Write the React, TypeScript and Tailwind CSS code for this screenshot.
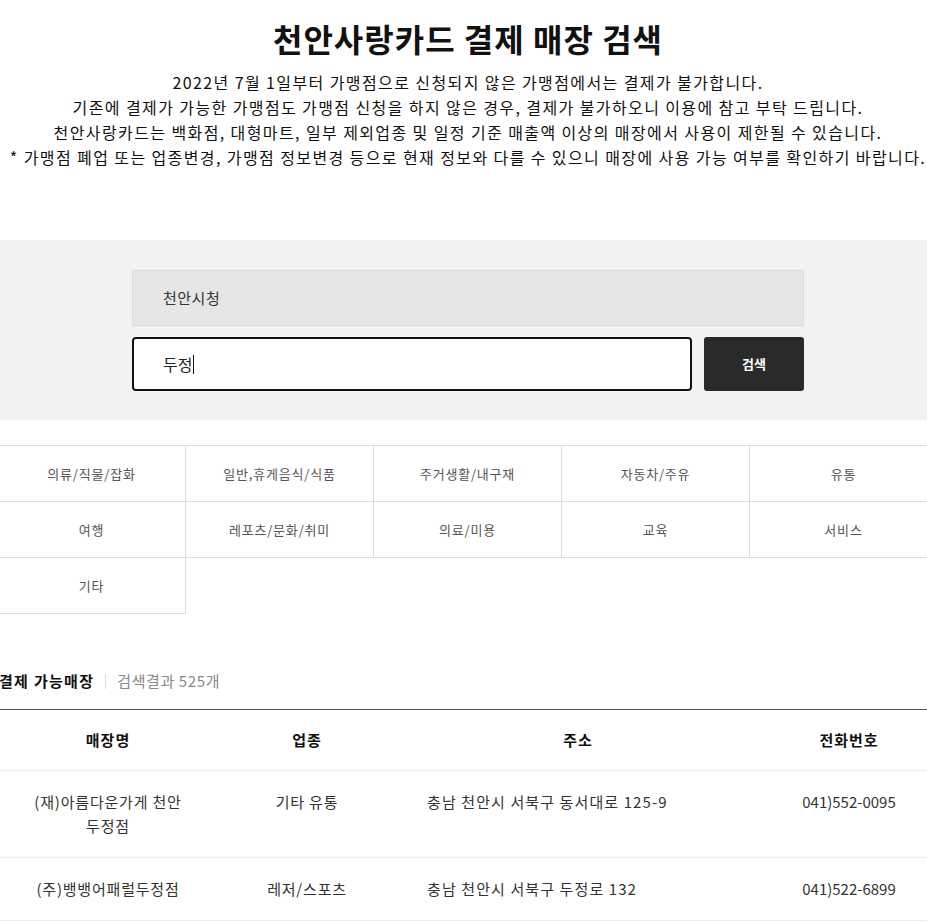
import React from 'react'

const categories = [
  '의류/직물/잡화',
  '일반,휴게음식/식품',
  '주거생활/내구재',
  '자동차/주유',
  '유통',
  '여행',
  '레포츠/문화/취미',
  '의료/미용',
  '교육',
  '서비스',
  '기타',
]

const stores = [
  { name: '(재)아름다운가게 천안\n두정점', type: '기타 유통', addr: '충남 천안시 서북구 동서대로 125-9', tel: '041)552-0095' },
  { name: '(주)뱅뱅어패럴두정점', type: '레저/스포츠', addr: '충남 천안시 서북구 두정로 132', tel: '041)522-6899' },
]

export default function App() {
  return (
    <div className="w-full overflow-hidden bg-white text-[#111] font-['Noto_Sans_CJK_KR','Noto_Sans',sans-serif]">
      {/* intro */}
      <div className="w-[940px] ml-[-2px] pt-[18px] text-center">
        <h1 className="text-[32px] leading-[40px] font-bold tracking-[1px]">천안사랑카드 결제 매장 검색</h1>
        <div className="mt-[12px] text-[16px] leading-[25px] text-[#111] tracking-[1.4px]">
          <p>2022년 7월 1일부터 가맹점으로 신청되지 않은 가맹점에서는 결제가 불가합니다.</p>
          <p>기존에 결제가 가능한 가맹점도 가맹점 신청을 하지 않은 경우, 결제가 불가하오니 이용에 참고 부탁 드립니다.</p>
          <p>천안사랑카드는 백화점, 대형마트, 일부 제외업종 및 일정 기준 매출액 이상의 매장에서 사용이 제한될 수 있습니다.</p>
          <p>* 가맹점 폐업 또는 업종변경, 가맹점 정보변경 등으로 현재 정보와 다를 수 있으니 매장에 사용 가능 여부를 확인하기 바랍니다.</p>
        </div>
      </div>

      {/* search */}
      <section className="mt-[70px] bg-[#f2f2f2] pt-[30px] pb-[29px]">
        <div className="w-[940px] ml-[-2px]">
          <div className="w-[672px] mx-auto flex flex-col gap-[11px]">
            <div className="h-[56px] bg-[#e6e6e6] border border-[#dcdcdc] flex items-center pl-[30px] text-[15px] text-[#333] tracking-[0.5px]">
              천안시청
            </div>
            <div className="flex gap-[12px] h-[54px]">
              <div className="flex-1 h-[54px] bg-white border-2 border-[#111] rounded-[4px] flex items-center pl-[29px] text-[16px] text-[#222]">
                두정<span className="inline-block w-px h-[19px] bg-[#111] ml-px" />
              </div>
              <button className="w-[100px] h-[54px] shrink-0 bg-[#2a2a2a] rounded-[3px] text-white text-[13px] font-bold">
                검색
              </button>
            </div>
          </div>
        </div>
      </section>

      {/* categories, results */}
      <div className="w-[940px] ml-[-2px]">
        <div className="mt-[25px] grid grid-cols-5 border-t border-[#ddd]">
          {categories.map((c) => (
            <div
              key={c}
              className="h-[56px] border-b border-r border-[#ddd] flex items-center justify-center text-[13px] text-[#555] tracking-[0.8px]"
            >
              {c}
            </div>
          ))}
        </div>

        <div className="mt-[56px] flex items-center h-[22px] text-[15px] leading-[22px]">
          <span className="font-bold text-[#111] pl-[1px] tracking-[1.3px]">결제 가능매장</span>
          <span className="mx-[11px] w-px h-[15px] bg-[#ddd]" />
          <span className="text-[#888] tracking-[0.6px]">검색결과 525개</span>
        </div>

        <table className="mt-[17px] w-full table-fixed border-t border-[#555] text-[15px] text-[#333]">
          <colgroup>
            <col className="w-[220px]" />
            <col className="w-[178px]" />
            <col className="w-[364px]" />
            <col className="w-[178px]" />
          </colgroup>
          <thead>
            <tr className="h-[61px] border-b border-[#eee]">
              <th className="font-bold text-[#111] tracking-[1px]">매장명</th>
              <th className="font-bold text-[#111] tracking-[1px]">업종</th>
              <th className="font-bold text-[#111] tracking-[1px]">주소</th>
              <th className="font-bold text-[#111] tracking-[1px]">전화번호</th>
            </tr>
          </thead>
          <tbody>
            {stores.map((s) => (
              <tr key={s.tel} className="border-b border-[#eee]">
                <td className="py-[19px] px-[20px] text-center align-top leading-[24px] whitespace-pre-line tracking-[0.8px]">{s.name}</td>
                <td className="py-[19px] text-center align-top leading-[24px] tracking-[0.8px]">{s.type}</td>
                <td className="py-[19px] pl-[31px] text-left align-top leading-[24px] tracking-[1.1px]">{s.addr}</td>
                <td className="py-[19px] text-center align-top leading-[24px]">{s.tel}</td>
              </tr>
            ))}
          </tbody>
        </table>
      </div>
    </div>
  )
}
